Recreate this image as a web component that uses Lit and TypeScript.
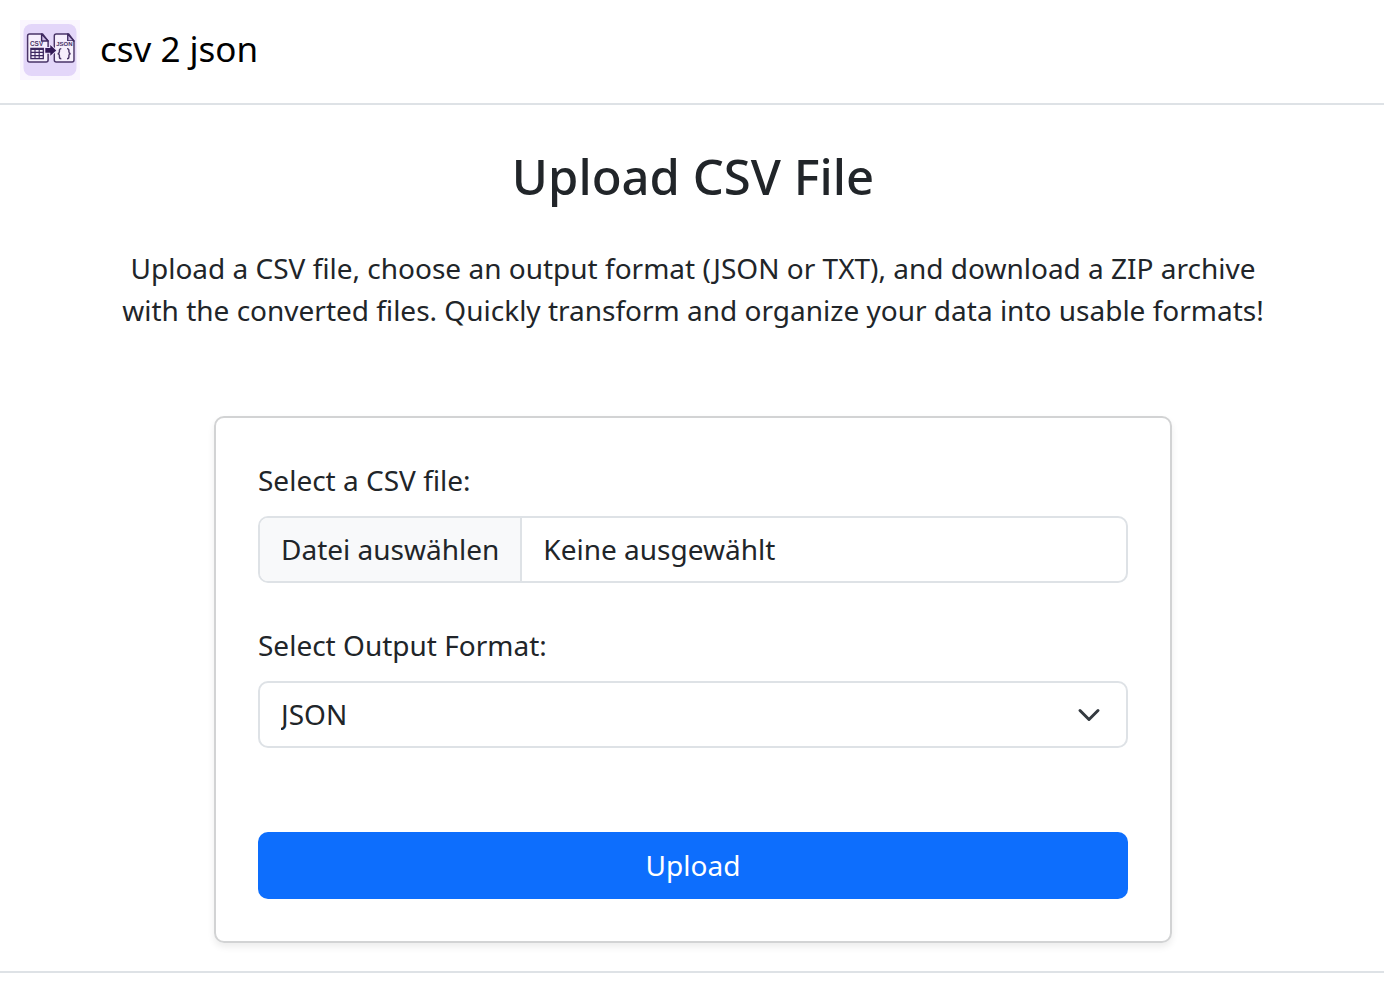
import { LitElement, html, css, svg } from "lit";
import { customElement, state } from "lit/decorators.js";

const page = svg`<path d="M2 0H15L20.5 7V26Q20.5 28 18.5 28H2Q0 28 0 26V2Q0 0 2 0Z" fill="#f6effd" stroke="#4a3568" stroke-width="1.5"/><path d="M14 0V7H20.5Z" fill="#cdbbe6" stroke="#3d2860" stroke-width="1.4" stroke-linejoin="round"/>`;

@customElement("app-root")
export class AppRoot extends LitElement {
  static styles = css`
    :host {
      display: block;
      background: #fff;
      color: #212529;
      font-family: "Noto Sans", sans-serif;
      font-size: 28px;
      line-height: 40px;
    }
    * {
      box-sizing: border-box;
    }
    .header {
      border-bottom: 2px solid #dee2e6;
      padding: 20px 20px 23px;
    }
    .brand {
      display: inline-flex;
      align-items: flex-start;
      gap: 20px;
      vertical-align: top;
      color: #000;
      font-size: 35px;
      line-height: 58px;
      text-decoration: none;
    }
    .logo {
      display: block;
      width: 60px;
      height: 60px;
    }
    .logo-text {
      font-family: "Liberation Sans", sans-serif;
      font-weight: 700;
      fill: #4a3568;
    }
    .main {
      display: flex;
      flex-direction: column;
      align-items: center;
      padding: 42px 20px 28px 22px;
      text-align: center;
    }
    .title {
      margin: 0 0 41px;
      font-size: 49px;
      line-height: 59px;
      font-weight: 500;
    }
    .intro {
      max-width: 1160px;
      margin: 0 0 85px;
      line-height: 42px;
    }
    .card {
      display: flex;
      flex-direction: column;
      width: 100%;
      max-width: 958px;
      padding: 42px;
      border: 2px solid #d2d3d4;
      border-radius: 10px;
      box-shadow: 0 4px 7px rgba(0, 0, 0, 0.075);
      text-align: left;
    }
    .label {
      align-self: flex-start;
      margin-bottom: 16px;
    }
    .control {
      position: relative;
      display: flex;
      width: 100%;
      height: 67px;
      margin-bottom: 42px;
      border: 2px solid #dee2e6;
      border-radius: 10px;
      overflow: hidden;
    }
    .control:focus-within {
      border-color: #86b7fe;
    }
    .choose {
      padding: 11px 21px 12px;
      border-right: 2px solid #dee2e6;
      background: #f8f9fa;
      white-space: nowrap;
    }
    .chosen {
      flex: 1;
      padding: 11px 21px 12px;
      overflow: hidden;
      white-space: nowrap;
      text-overflow: ellipsis;
    }
    .file {
      position: absolute;
      inset: 0;
      width: 100%;
      height: 100%;
      opacity: 0;
      font: inherit;
      cursor: pointer;
    }
    .format {
      margin-bottom: 84px;
    }
    .select {
      width: 100%;
      padding: 0 63px 2px 21px;
      border: 0;
      outline: 0;
      appearance: none;
      background: transparent;
      color: inherit;
      font: inherit;
    }
    .chevron {
      position: absolute;
      right: 25px;
      top: 20px;
      width: 24px;
      height: 24px;
      pointer-events: none;
    }
    .upload {
      height: 67px;
      padding: 0 21px 2px;
      border: 0;
      border-radius: 10px;
      background: #0d6efd;
      color: #fff;
      font: inherit;
      cursor: pointer;
    }
    .footer {
      height: 33px;
      border-top: 2px solid #dee2e6;
    }
  `;

  @state() private fileName = "";

  private pick(e: Event) {
    this.fileName = (e.target as HTMLInputElement).files?.[0]?.name ?? "";
  }

  render() {
    return html`
      <header class="header">
        <a class="brand" href="#">
          <svg class="logo" viewBox="0 0 60 60" aria-hidden="true">
            <rect width="60" height="60" fill="#faf6fe" />
            <rect x="3.5" y="4" width="53" height="52" rx="8" fill="#e3d6f9" />
            <g transform="translate(7.6 14)">${page}</g>
            <g transform="translate(34.3 14)"><g transform="scale(.96 1)">${page}</g></g>
            <text class="logo-text" x="10" y="25.7" font-size="6.4">CSV</text>
            <rect x="35.6" y="21" width="17.2" height="5.2" fill="#f0e7fb" />
            <text class="logo-text" x="36.2" y="25.8" font-size="6">JSON</text>
            <rect x="10.9" y="28.4" width="12.4" height="10.2" fill="#f6effd" stroke="#3d2860" stroke-width="1.3" />
            <rect x="10.9" y="28" width="12.4" height="2" fill="#3d2860" />
            <path d="M10.9 32.4H23.3M10.9 35.6H23.3M15 28V38.6M19.2 28V38.6" stroke="#3d2860" stroke-width="1.1" />
            <path
              d="M25.3 28.1H30.3V25L36.2 30.4L30.3 35.8V32.7H25.3Z"
              fill="#331a57"
              stroke="#e9defa"
              stroke-width="2"
              paint-order="stroke"
            />
            <path
              d="M41.3 28.6Q39.4 28.6 39.4 30.4V31.8Q39.4 33.5 37.7 33.7Q39.4 33.9 39.4 35.6V37Q39.4 38.8 41.3 38.8M47 28.6Q48.9 28.6 48.9 30.4V31.8Q48.9 33.5 50.6 33.7Q48.9 33.9 48.9 35.6V37Q48.9 38.8 47 38.8"
              fill="none"
              stroke="#4a3568"
              stroke-width="1.4"
            />
          </svg>
          csv 2 json
        </a>
      </header>
      <main class="main">
        <h1 class="title">Upload CSV File</h1>
        <p class="intro">
          Upload a CSV file, choose an output format (JSON or TXT), and download a ZIP archive with the
          converted files. Quickly transform and organize your data into usable formats!
        </p>
        <form class="card" @submit=${(e: Event) => e.preventDefault()}>
          <label class="label" for="file">Select a CSV file:</label>
          <div class="control">
            <span class="choose" aria-hidden="true">Datei auswählen</span>
            <span class="chosen">${this.fileName || "Keine ausgewählt"}</span>
            <input class="file" id="file" type="file" accept=".csv" @change=${this.pick} />
          </div>
          <label class="label" for="format">Select Output Format:</label>
          <div class="control format">
            <select class="select" id="format">
              <option>JSON</option>
              <option>TXT</option>
            </select>
            <svg class="chevron" viewBox="0 0 16 16" aria-hidden="true">
              <path
                d="m2 5 6 6 6-6"
                fill="none"
                stroke="#343a40"
                stroke-width="2"
                stroke-linecap="round"
                stroke-linejoin="round"
              />
            </svg>
          </div>
          <button class="upload" type="submit">Upload</button>
        </form>
      </main>
      <footer class="footer"></footer>
    `;
  }
}
